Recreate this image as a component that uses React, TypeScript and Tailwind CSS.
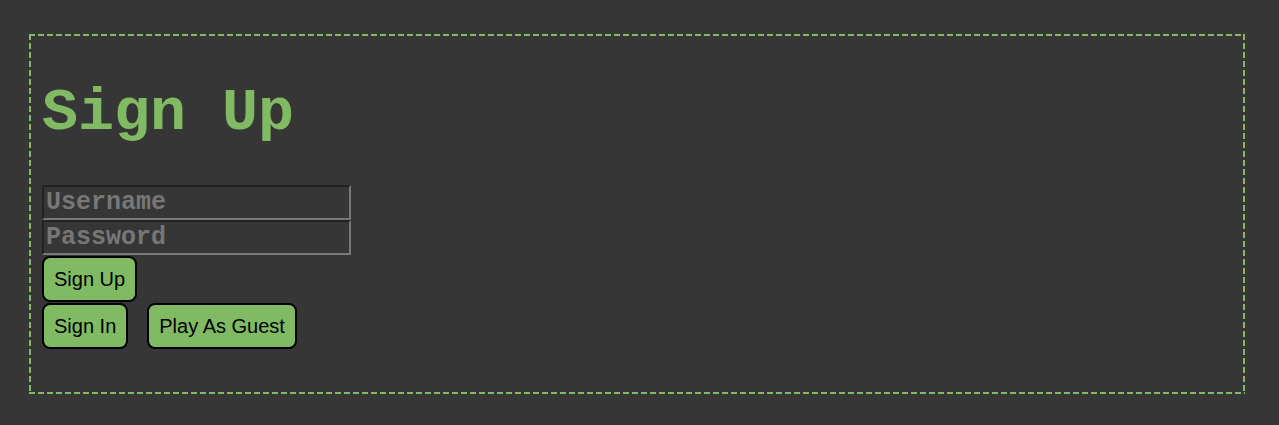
const mono = '"Courier New", "Nimbus Mono PS", "FreeMono", Courier, "Liberation Mono", monospace';

export default function App() {
  return (
    <div className="min-h-[425px] bg-[#363636] pt-[34px] pl-[29px]">
      {/* dashed frame: 6px dash, 3px gap */}
      <div className="w-[1216px] h-[360px] p-[2px] [background:repeating-linear-gradient(90deg,#80bb64_0_6px,transparent_6px_9px)_top_left/100%_2px_no-repeat,repeating-linear-gradient(90deg,#80bb64_0_6px,transparent_6px_9px)_bottom_left/100%_2px_no-repeat,repeating-linear-gradient(180deg,#80bb64_0_6px,transparent_6px_9px)_top_left/2px_100%_no-repeat,repeating-linear-gradient(180deg,#80bb64_0_6px,transparent_6px_9px)_top_right/2px_100%_no-repeat]">
        <div className="px-[11px]">
          <h1
            className="mt-[47px] text-[60px] leading-[60px] font-bold text-[#80bb64]"
            style={{ fontFamily: mono }}
          >
            Sign Up
          </h1>
          <div className="mt-[42px] flex flex-col">
            <input
              placeholder="Username"
              className="w-[309px] h-[35px] bg-[#363636] border-2 border-t-[#222222] border-l-[#222222] border-b-[#787878] border-r-[#787878] px-[2px] text-[25px] font-bold text-[#777777] placeholder:text-[#777777] outline-none"
              style={{ fontFamily: mono }}
            />
            <input
              type="password"
              placeholder="Password"
              className="w-[309px] h-[35px] bg-[#363636] border-2 border-t-[#222222] border-l-[#222222] border-b-[#787878] border-r-[#787878] px-[2px] text-[25px] font-bold text-[#777777] placeholder:text-[#777777] outline-none"
              style={{ fontFamily: mono }}
            />
          </div>
          <div
            className="mt-[1px] flex flex-col items-start gap-[1px]"
            style={{ fontFamily: '"Liberation Sans", Arial, sans-serif' }}
          >
            <button className="h-[46px] px-[10px] bg-[#80bb64] border-2 border-black rounded-lg text-[20px] text-black">
              Sign Up
            </button>
            <div className="flex gap-[19px]">
              <button className="h-[46px] px-[10px] bg-[#80bb64] border-2 border-black rounded-lg text-[20px] text-black">
                Sign In
              </button>
              <button className="h-[46px] px-[10px] bg-[#80bb64] border-2 border-black rounded-lg text-[20px] text-black">
                Play As Guest
              </button>
            </div>
          </div>
        </div>
      </div>
    </div>
  );
}
